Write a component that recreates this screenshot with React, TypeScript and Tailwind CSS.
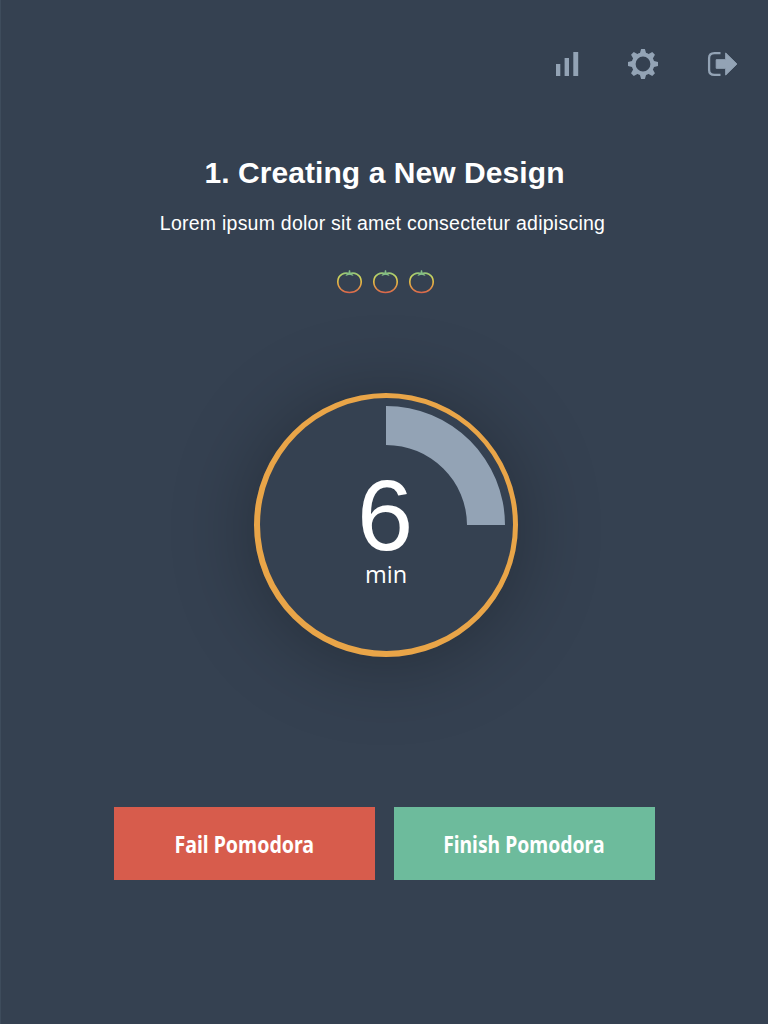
const teeth = [0, 45, 90, 135, 180, 225, 270, 315];
const pomodoros = [1, 2, 3];

function StatsIcon() {
  return (
    <svg className="h-8 w-8" viewBox="0 0 32 32" fill="currentColor">
      <path d="M5 16h4.3v12H5zM13.6 10H18v18h-4.4zM22.3 4h4.9v24h-4.9z" />
    </svg>
  );
}

function SettingsIcon() {
  return (
    <svg className="h-8 w-8" viewBox="-16 -16 32 32" fill="currentColor">
      <circle r="9.4" fill="none" stroke="currentColor" strokeWidth="4" />
      {teeth.map((angle) => (
        <path key={angle} d="M-3.3-10 L-1.9-15h3.8L3.3-10z" transform={`rotate(${angle})`} />
      ))}
    </svg>
  );
}

function ExitIcon() {
  return (
    <svg className="h-8 w-8" viewBox="0 0 32 32">
      <path d="M15.5 5.1H9.5Q4.1 5.1 4.1 10v12q0 4.9 5.4 4.9h6" fill="none" stroke="currentColor" strokeWidth="2.3" />
      <path
        d="M11.5 11.7h9.5V5l11.2 11-11.2 11v-6.7h-9.5z"
        transform="translate(-.3 0)"
        fill="currentColor"
        stroke="currentColor"
        strokeLinejoin="round"
      />
    </svg>
  );
}

function TomatoIcon() {
  return (
    <svg className="h-6 w-[26px]" viewBox="0 0 26 24">
      <defs>
        <linearGradient id="tomato" x1="0" y1="2" x2="0" y2="24" gradientUnits="userSpaceOnUse">
          <stop offset="0" stopColor="#8fc57b" />
          <stop offset=".22" stopColor="#c8d45f" />
          <stop offset=".45" stopColor="#e9bd43" />
          <stop offset=".72" stopColor="#e29147" />
          <stop offset="1" stopColor="#d95b4c" />
        </linearGradient>
      </defs>
      <path
        d="M12.5 3.8C10.3 3 7.3 3 5 4.2 2.3 5.7.8 8.6.8 11.8c0 6.2 5 10.7 11.7 10.7S24.2 18 24.2 11.8c0-3.2-1.5-6.1-4.2-7.6-2.3-1.2-5.3-1.2-7.5-.4z"
        fill="none"
        stroke="url(#tomato)"
        strokeWidth="1.6"
      />
      <path d="M11.9.3h1.2l.5 2.7 3.2.8-1.5.4 1.4 1.9-4.2-1.4-4.2 1.4 1.4-1.9-1.5-.4 3.2-.8z" fill="#83bd85" />
    </svg>
  );
}

export default function App() {
  return (
    <main className="flex h-[1024px] w-[768px] flex-col items-center overflow-hidden border-l border-[#3e4c5c] bg-[#354151] font-['Liberation_Sans',sans-serif] text-white">
      <nav className="flex w-full justify-end gap-11 pt-12 pr-[31px] text-[#93a3b5]">
        <button><StatsIcon /></button>
        <button><SettingsIcon /></button>
        <button className="ml-0.5"><ExitIcon /></button>
      </nav>
      <h1 className="mt-[73px] h-10 text-[30px] leading-10 font-bold tracking-[0.07px] whitespace-nowrap">1. Creating a New Design</h1>
      <p className="mt-4 mr-1 h-7 text-[19.5px] leading-7 tracking-[0.24px] whitespace-nowrap">
        Lorem ipsum dolor sit amet consectetur adipiscing
      </p>
      <div className="mt-[33px] flex gap-2.5 pl-0.5">
        {pomodoros.map((n) => (
          <TomatoIcon key={n} />
        ))}
      </div>
      <section className="relative mt-[99px] ml-[3px] h-[264px] w-[264px] shrink-0 rounded-full bg-[#354151] shadow-[0_5px_84px_rgba(0,0,0,0.3)]">
        <svg className="absolute inset-0 h-full w-full" viewBox="0 0 264 264">
          <path
            d="M132 0a132 132 0 1 0 0 264a132 132 0 1 0 0-264zM132.5 5a126.5 126.5 0 1 1 0 253a126.5 126.5 0 1 1 0-253z"
            fill="#e9a548"
            fillRule="evenodd"
          />
          <path d="M132 13A119 119 0 0 1 251 132H213A81 80 0 0 0 132 52z" fill="#93a3b5" />
        </svg>
        <div className="relative flex flex-col items-center pt-[72px]">
          <span className="mr-[2px] h-[93px] text-[101px] leading-[100px]">6</span>
          <span className="h-8 font-['Open_Sans',sans-serif] text-[23.5px] leading-8">min</span>
        </div>
      </section>
      <div className="mt-[150px] flex gap-[19px] font-['Noto_Sans',sans-serif] text-[22.5px] font-bold">
        <button className="flex h-[73px] w-[261px] items-center justify-center bg-[#d75c4c] pt-0.5">
          <span className="mr-px scale-x-[0.87] whitespace-nowrap">Fail Pomodora</span>
        </button>
        <button className="flex h-[73px] w-[261px] items-center justify-center bg-[#6dbb9c] pt-0.5">
          <span className="mr-px scale-x-[0.86] whitespace-nowrap">Finish Pomodora</span>
        </button>
      </div>
    </main>
  );
}
